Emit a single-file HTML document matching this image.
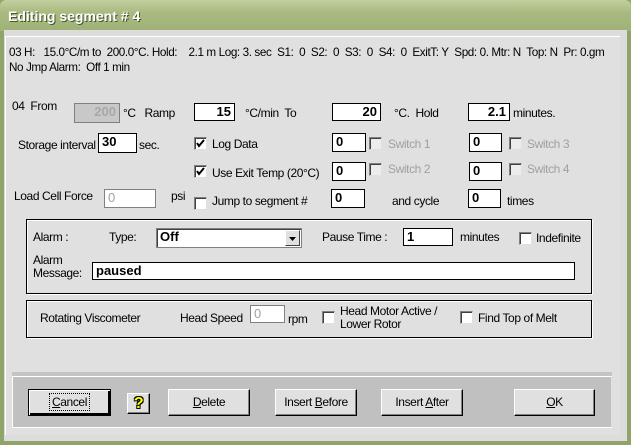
<!DOCTYPE html>
<html><head><style>
*{margin:0;padding:0;box-sizing:border-box}
body{width:631px;height:445px;overflow:hidden;background:#8fa468;font-family:"Liberation Sans",Arial,sans-serif;font-size:12px;color:#000;position:relative}
.t{position:absolute;white-space:nowrap;letter-spacing:-0.4px;line-height:14px}
.g{color:#a0a0a0}
.inp{position:absolute;background:#fff;border:1px solid #000;font-weight:bold;font-size:13px;line-height:16px;padding:0 3px}
.inp.r{text-align:right}
.dw{background:#fff;border:1px solid #808080;color:#a0a0a0;font-weight:normal}
.cb{position:absolute;width:13px;height:13px;background:#fff;border:1px solid #808080;border-right-color:#e0e0e0;border-bottom-color:#e0e0e0;box-shadow:inset 1px 1px 0 #404040}
.cb.d{background:#ececec}
.cb svg{position:absolute;left:1px;top:1px}
.box{position:absolute;border:1px solid #000;box-shadow:1px 1px 0 #fff, inset 1px 1px 0 #fff}
.btn{position:absolute;height:27px;background:#e0e0e0;border:1px solid #fff;border-right-color:#000;border-bottom-color:#000;box-shadow:inset -1px -1px 0 #808080;text-align:center;line-height:25px;letter-spacing:-0.4px}
</style></head><body>
<div style="position:absolute;left:0;top:0;width:631px;height:31px;background:linear-gradient(#c2cfa0,#a8ba80 40%,#9fb276);border-radius:6px 6px 0 0"></div>
<div class="t" style="left:8px;top:9px;font-size:14px;font-weight:bold;color:#fff;text-shadow:1px 1px 0 #4a5530;letter-spacing:0">Editing segment # 4</div>
<div style="position:absolute;left:4px;top:30px;width:623px;height:411px;background:#dcdcdc"></div>
<div style="position:absolute;left:5px;top:36px;width:615px;height:399px;background:#e0e0e0;border-top:1px solid #fff;border-left:1px solid #fff"></div>

<div class="t" style="left:9px;top:46px;font-size:11.7px">03 H:&nbsp;&nbsp; 15.0°C/m to&nbsp; 200.0°C. Hold:&nbsp;&nbsp;&nbsp; 2.1 m Log: 3. sec&nbsp; S1:&nbsp; 0&nbsp; S2:&nbsp; 0&nbsp; S3:&nbsp; 0&nbsp; S4:&nbsp; 0&nbsp; ExitT: Y&nbsp; Spd: 0. Mtr: N&nbsp; Top: N&nbsp; Pr: 0.gm</div>
<div class="t" style="left:9px;top:61px;font-size:11.7px">No Jmp Alarm:&nbsp; Off 1 min</div>

<div class="t" style="left:12px;top:99px">04&nbsp; From</div>
<div class="inp r" style="left:74px;top:103px;width:46px;height:20px;background:#c8c8c8;border-color:#808080;color:#a8a8a8">200</div>
<div class="t" style="left:123px;top:106px">°C&nbsp;&nbsp; Ramp</div>
<div class="inp r" style="left:194px;top:103px;width:41px;height:18px">15</div>
<div class="t" style="left:245px;top:106px">°C/min&nbsp; To</div>
<div class="inp r" style="left:332px;top:103px;width:49px;height:18px">20</div>
<div class="t" style="left:394px;top:106px">°C.&nbsp; Hold</div>
<div class="inp r" style="left:468px;top:103px;width:42px;height:18px">2.1</div>
<div class="t" style="left:513px;top:106px">minutes.</div>

<div class="t" style="left:18px;top:138px">Storage interval</div>
<div class="inp" style="left:98px;top:133px;width:39px;height:20px">30</div>
<div class="t" style="left:139px;top:138px">sec.</div>
<div class="cb" style="left:194px;top:137px"><svg width="9" height="9"><path d="M1 4 L3 7 L8 1" stroke="#000" stroke-width="2" fill="none"/></svg></div>
<div class="t" style="left:212px;top:137px">Log Data</div>
<div class="inp" style="left:332px;top:133px;width:34px;height:19px">0</div>
<div class="cb d" style="left:369px;top:137px"></div>
<div class="t g" style="left:388px;top:137px">Switch 1</div>
<div class="inp" style="left:469px;top:133px;width:33px;height:19px">0</div>
<div class="cb d" style="left:509px;top:137px"></div>
<div class="t g" style="left:527px;top:137px">Switch 3</div>

<div class="cb" style="left:194px;top:165px"><svg width="9" height="9"><path d="M1 4 L3 7 L8 1" stroke="#000" stroke-width="2" fill="none"/></svg></div>
<div class="t" style="left:212px;top:166px">Use Exit Temp (20°C)</div>
<div class="inp" style="left:332px;top:162px;width:34px;height:19px">0</div>
<div class="cb d" style="left:369px;top:163px"></div>
<div class="t g" style="left:388px;top:162px">Switch 2</div>
<div class="inp" style="left:469px;top:162px;width:33px;height:19px">0</div>
<div class="cb d" style="left:509px;top:163px"></div>
<div class="t g" style="left:527px;top:162px">Switch 4</div>

<div class="t" style="left:14px;top:189px">Load Cell Force</div>
<div class="inp dw" style="left:104px;top:189px;width:52px;height:19px">0</div>
<div class="t" style="left:171px;top:189px">psi</div>
<div class="cb" style="left:194px;top:197px"></div>
<div class="t" style="left:212px;top:194px">Jump to segment #</div>
<div class="inp" style="left:331px;top:189px;width:34px;height:19px">0</div>
<div class="t" style="left:392px;top:194px">and cycle</div>
<div class="inp" style="left:468px;top:189px;width:33px;height:19px">0</div>
<div class="t" style="left:507px;top:194px">times</div>

<div class="box" style="left:26px;top:219px;width:566px;height:75px"></div>
<div class="t" style="left:33px;top:230px">Alarm :</div>
<div class="t" style="left:109px;top:230px">Type:</div>
<div class="inp" style="left:156px;top:228px;width:146px;height:20px;border-color:#808080;box-shadow:inset 1px 1px 0 #404040">Off</div>
<div style="position:absolute;left:285px;top:230px;width:15px;height:16px;background:#e0e0e0;border:1px solid #fff;border-right-color:#404040;border-bottom-color:#404040"><svg width="13" height="14"><path d="M3 6 L10 6 L6.5 10 Z" fill="#000"/></svg></div>
<div class="t" style="left:322px;top:230px">Pause Time :</div>
<div class="inp" style="left:403px;top:228px;width:50px;height:18px">1</div>
<div class="t" style="left:460px;top:230px">minutes</div>
<div class="cb" style="left:519px;top:232px"></div>
<div class="t" style="left:536px;top:231px">Indefinite</div>
<div class="t" style="left:33px;top:253px">Alarm</div>
<div class="t" style="left:33px;top:266px">Message:</div>
<div class="inp" style="left:92px;top:262px;width:483px;height:18px">paused</div>

<div class="box" style="left:26px;top:300px;width:566px;height:38px"></div>
<div class="t" style="left:40px;top:311px">Rotating Viscometer</div>
<div class="t" style="left:180px;top:311px">Head Speed</div>
<div class="inp dw" style="left:250px;top:305px;width:35px;height:18px">0</div>
<div class="t" style="left:288px;top:312px">rpm</div>
<div class="cb" style="left:322px;top:311px"></div>
<div class="t" style="left:340px;top:304px">Head Motor Active /</div>
<div class="t" style="left:340px;top:317px">Lower Rotor</div>
<div class="cb" style="left:460px;top:311px"></div>
<div class="t" style="left:478px;top:311px">Find Top of Melt</div>

<div style="position:absolute;left:12px;top:372px;width:600px;height:5px;background:#c4c4c4"></div>
<div style="position:absolute;left:12px;top:376px;width:600px;height:52px;background:#c0c0c0;border:1px solid #fff;border-right-color:#e0e0e0"></div>
<div class="btn" style="left:28px;top:389px;width:83px;border:1px solid #000;box-shadow:inset 1px 1px 0 #fff,inset -2px -2px 0 #000"><span style="border:1px dotted #000;padding:1px 2px"><u>C</u>ancel</span></div>
<div class="btn" style="left:127px;top:393px;width:23px;height:21px;line-height:19px;font-weight:bold;font-size:16px;color:#ff0;text-shadow:1px 1px 0 #000,-1px -1px 0 #000,1px -1px 0 #000,-1px 1px 0 #000">?</div>
<div class="btn" style="left:168px;top:389px;width:82px"><u>D</u>elete</div>
<div class="btn" style="left:275px;top:389px;width:82px">Insert <u>B</u>efore</div>
<div class="btn" style="left:381px;top:389px;width:82px">Insert <u>A</u>fter</div>
<div class="btn" style="left:514px;top:389px;width:81px"><u>O</u>K</div>
</body></html>
